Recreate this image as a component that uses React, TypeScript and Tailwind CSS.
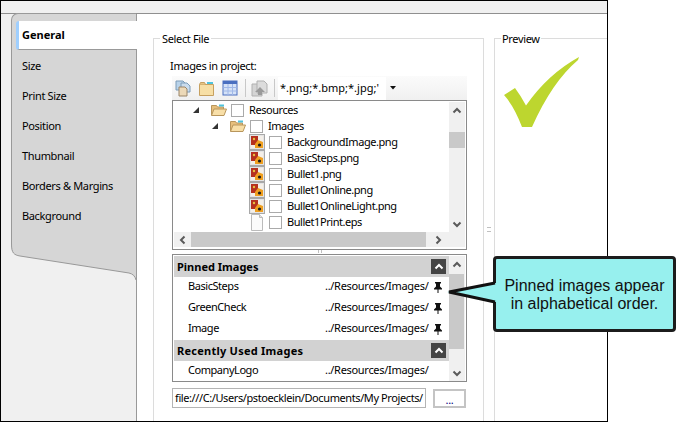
import React from "react";

const ui = { fontFamily: '"Noto Sans", sans-serif' };

function Chevron({ dir, color = "#5a5a5a" }: { dir: "up" | "down" | "left" | "right"; color?: string }) {
  const pts = {
    up: "1.5,6.5 5,3 8.5,6.5",
    down: "1.5,3.5 5,7 8.5,3.5",
    left: "6.5,1.5 3,5 6.5,8.5",
    right: "3.5,1.5 7,5 3.5,8.5",
  }[dir];
  return (
    <svg width="10" height="10" viewBox="0 0 10 10">
      <polyline points={pts} fill="none" stroke={color} strokeWidth="2" />
    </svg>
  );
}

function Check() {
  return <span className="block w-[13px] h-[13px] shrink-0 border border-[#aaaaaa] bg-white" />;
}

function Triangle() {
  return (
    <svg width="6" height="6" viewBox="0 0 6 6" className="shrink-0">
      <polygon points="6,0 6,6 0,6" fill="#333333" />
    </svg>
  );
}

function FolderOpen() {
  return (
    <svg width="16" height="16" viewBox="0 0 16 16" className="shrink-0">
      <path d="M0.5 3.500h5l1 1.500h6v8h-12z" fill="#e7bf7c" stroke="#b8965c" />
      <path d="M8 2.500h5v2H8z" fill="#4fc3dc" />
      <path d="M0.500 13.500l2.500-6.500h12.500l-2.500 6.500z" fill="#f8dfa8" stroke="#b8965c" />
    </svg>
  );
}

function ImageIcon() {
  return (
    <svg width="16" height="16" viewBox="0 0 16 16" className="shrink-0">
      <rect x="0.5" y="0.5" width="15" height="15" fill="#e4e4e4" stroke="#a8a8a8" />
      <rect x="2" y="2" width="12" height="12" fill="#f4efe8" />
      <rect x="2" y="2" width="7" height="9" fill="#b5301f" />
      <circle cx="5" cy="5" r="1.200" fill="#e8c040" />
      <path d="M6 10l3-4 5 2v6H6z" fill="#f0a020" />
      <circle cx="10.500" cy="11" r="1.600" fill="#1c1c1c" />
    </svg>
  );
}

function DocIcon() {
  return (
    <svg width="16" height="17" viewBox="0 0 16 17" className="shrink-0">
      <path d="M2.500 0.500h8l3 3v13h-11z" fill="#fbfbfb" stroke="#bbbbbb" />
      <path d="M10.500 0.500v3h3" fill="#e4e4e4" stroke="#bbbbbb" />
    </svg>
  );
}

function Pin() {
  return (
    <svg width="8" height="11" viewBox="0 0 8 11">
      <path d="M1 0h6v1.500H6V4.500L8 6.500V7.500H4.500V11H3.500V7.500H0V6.500L2 4.500V1.500H1z" fill="#111111" />
    </svg>
  );
}

function CollapseButton() {
  return (
    <span className="w-[15px] h-[15px] bg-[#444444] flex items-center justify-center">
      <Chevron dir="up" color="#ffffff" />
    </span>
  );
}

function TreeRow({ indent, icon, name }: { indent: string; icon: React.ReactNode; name: string }) {
  return (
    <div className={`h-[16px] flex items-center ${indent}`}>
      {icon}
      <span className="ml-[4px]"><Check /></span>
      <span className="ml-[5px] whitespace-nowrap tracking-[-0.45px]">{name}</span>
    </div>
  );
}

const files: [string, boolean][] = [
  ["BackgroundImage.png", true],
  ["BasicSteps.png", true],
  ["Bullet1.png", true],
  ["Bullet1Online.png", true],
  ["Bullet1OnlineLight.png", true],
  ["Bullet1Print.eps", false],
];

function PinnedRow({ name, path, pin }: { name: string; path: string; pin: boolean }) {
  return (
    <div className="h-[21px] flex items-center bg-white pl-[14px] tracking-[-0.45px]">
      <span className="w-[137px] shrink-0 pb-[3px]">{name}</span>
      <span className={`${pin ? "w-[104px]" : "w-[107px]"} shrink-0 overflow-hidden whitespace-nowrap pb-[3px] tracking-[-0.3px]`}>{path}</span>
      {pin && <span className="ml-[5px] flex"><Pin /></span>}
    </div>
  );
}

function PinnedHeader({ title, tracking }: { title: string; tracking: string }) {
  return (
    <div className={`h-[21px] flex items-center justify-between bg-[#d2d2d2] pl-[3px] pr-[3px] font-bold ${tracking}`}>
      <span>{title}</span>
      <CollapseButton />
    </div>
  );
}

const tabs = ["Size", "Print Size", "Position", "Thumbnail", "Borders & Margins", "Background"];

export default function App() {
  return (
    <div className="relative w-[685px] h-[422px] bg-white text-[11px] leading-[14px] tracking-[-0.35px] text-black overflow-hidden" style={ui}>
      <div className="w-[608px] h-[422px] border border-black flex flex-col">
        <div className="h-[13px] shrink-0 bg-[#f0f0f0] border-b border-[#8f8f8f]" />
        <div className="flex-1 flex min-h-0">
          {/* Sidebar */}
          <aside className="w-[136px] shrink-0 bg-[#f0f0f0] border-r border-[#999999] pl-[10px] flex flex-col">
            <div className="-mt-px h-[231px] bg-[#d6d6d6] border-l border-t border-[#999999] rounded-tl-[7px] pt-[7px] pl-[4px]">
              <div className="relative h-[29px] -mr-[1px] bg-white border-b border-[#999999] border-l-[3px] border-l-[#9fcfff] rounded-l-[3px] flex items-center pl-[3px] font-bold tracking-normal">
                General
              </div>
              <div className="flex flex-col pl-[6px] pt-[1px]">
                {tabs.map((t) => (
                  <div key={t} className="h-[30px] flex items-center whitespace-nowrap">{t}</div>
                ))}
              </div>
            </div>
            <svg width="125" height="37" viewBox="0 0 125 37" className="block shrink-0">
              <path d="M0 0C0 9 3 11 9 12L118 29C122 30 124 32 125 36V0z" fill="#d6d6d6" />
              <path d="M0.500 0C0.500 9 3 11 9 12L118 29C122 30 124 32 125 36" fill="none" stroke="#999999" />
            </svg>
          </aside>

          {/* Main */}
          <main className="flex-1 min-w-0 bg-white pl-[16px] pt-[24px] flex">
            <section className="relative w-[331px] shrink-0 border-l border-t border-r border-[#dcdcdc] pl-[18px] pt-[19px]">
              <span className="absolute -top-[7px] left-[6px] bg-white px-[2px]">Select File</span>
              <div className="-ml-[2px] h-[15px] flex items-center">Images in project:</div>
              {/* Toolbar */}
              <div className="mt-[3px] w-[295px] h-[24px] bg-gradient-to-b from-[#fbfbfb] to-[#f0f0f0] flex items-center pl-[3px]">
                <svg width="17" height="17" viewBox="0 0 17 17" className="shrink-0">
                  <path d="M1 1h7l2 2v7H1z" fill="#b9d3ea" stroke="#7d9cb8" />
                  <path d="M6 3h6l3 3v6H6z" fill="#c9dcee" stroke="#7d9cb8" />
                  <path d="M4 7h6l2 2v7H4z" fill="#ecd9b8" stroke="#9a8568" />
                </svg>
                <svg width="17" height="17" viewBox="0 0 17 17" className="ml-[6px] shrink-0">
                  <path d="M1.500 4.500h14v11h-14z" fill="#f7dfa6" stroke="#c6a060" />
                  <path d="M1.500 4.500l1-2h4l1 2" fill="#e7c585" stroke="#c6a060" />
                  <path d="M9 2h6v2H9z" fill="#4fc3dc" />
                </svg>
                <svg width="16" height="16" viewBox="0 0 16 16" className="ml-[7px] shrink-0">
                  <rect x="1" y="1" width="14" height="14" fill="#d5e2f7" stroke="#4a6fc0" />
                  <rect x="1" y="1" width="14" height="3" fill="#4a6fc0" />
                  <path d="M1.500 7.500h13M1.500 11h13M6 4v11M10.500 4v11" stroke="#a0b8e8" fill="none" />
                </svg>
                <span className="ml-[7px] w-px h-[18px] bg-[#c8c8c8]" />
                <svg width="17" height="17" viewBox="0 0 17 17" className="ml-[5px] shrink-0">
                  <path d="M1 4h8l2 2v10H1z" fill="#d4d4d4" stroke="#b0b0b0" />
                  <path d="M6 1h7l3 3v9H6z" fill="#dcdcdc" stroke="#b0b0b0" />
                  <path d="M4 12l5-5 5 5h-3v3H7v-3z" fill="#9a9a9a" />
                </svg>
                <span className="ml-[6px] w-px h-[18px] bg-[#c8c8c8]" />
                <div className="ml-[3px] w-[108px] h-[23px] bg-white flex items-center pl-[2px] overflow-hidden whitespace-nowrap tracking-[0px]">
                  *.png;*.bmp;*.jpg;'
                </div>
                <div className="ml-[1px] w-[12px] h-[23px] flex items-center justify-center">
                  <svg width="6" height="4" viewBox="0 0 6 4"><polygon points="0,0 6,0 3,3.500" fill="#111111" /></svg>
                </div>
              </div>
              {/* Tree */}
              <div className="w-[295px] h-[150px] border border-[#8a8a8a] p-[1px] flex flex-col">
                <div className="flex h-[130px]">
                  <div className="w-[275px] shrink-0 overflow-hidden">
                    <TreeRow indent="pl-[19px]" icon={<span className="flex items-center gap-[12px]"><Triangle /><FolderOpen /></span>} name="Resources" />
                    <TreeRow indent="pl-[38px]" icon={<span className="flex items-center gap-[12px]"><Triangle /><FolderOpen /></span>} name="Images" />
                    {files.map(([n, img]) => (
                      <TreeRow key={n} indent="pl-[75px]" icon={img ? <ImageIcon /> : <DocIcon />} name={n} />
                    ))}
                  </div>
                  <div className="w-[16px] shrink-0 bg-[#f0f0f0] flex flex-col items-center">
                    <div className="h-[17px] flex items-center"><Chevron dir="up" /></div>
                    <div className="mt-[13px] w-full h-[16px] bg-[#c9c9c9]" />
                    <div className="mt-auto h-[17px] flex items-center"><Chevron dir="down" /></div>
                  </div>
                </div>
                <div className="h-[15px] flex bg-[#f0f0f0] w-[291px] mb-[1px]">
                  <div className="w-[17px] flex items-center justify-center"><Chevron dir="left" /></div>
                  <div className="w-[235px] bg-[#c9c9c9]" />
                  <div className="w-[23px] flex items-center justify-center"><Chevron dir="right" /></div>
                </div>
              </div>
              {/* Splitter grip */}
              <div className="h-[4px] w-[295px] flex justify-center">
                <span className="w-[4px] h-[3px] border-x border-[#c0c0c0]" />
              </div>
              {/* Pinned */}
              <div className="w-[295px] h-[128px] border border-[#8a8a8a] pl-[1px] pt-[1px] flex">
                <div className="w-[275px] shrink-0 overflow-hidden">
                  <PinnedHeader title="Pinned Images" tracking="tracking-normal" />
                  <PinnedRow name="BasicSteps" path="../Resources/Images/" pin />
                  <PinnedRow name="GreenCheck" path="../Resources/Images/" pin />
                  <PinnedRow name="Image" path="../Resources/Images/" pin />
                  <PinnedHeader title="Recently Used Images" tracking="tracking-[0.25px]" />
                  <PinnedRow name="CompanyLogo" path="../Resources/Images/" pin={false} />
                </div>
                <div className="w-[16px] shrink-0 bg-[#f0f0f0] flex flex-col items-center">
                  <div className="h-[18px] flex items-center"><Chevron dir="up" /></div>
                  <div className="w-[15px] self-start h-[75px] bg-[#c9c9c9]" />
                  <div className="mt-auto h-[17px] flex items-center"><Chevron dir="down" /></div>
                </div>
              </div>
              {/* Path */}
              <div className="mt-[6px] w-[294px] flex justify-between">
                <div className="w-[254px] h-[20px] border border-[#b4b4b4] flex items-center pl-[2px] overflow-hidden whitespace-nowrap tracking-[-0.4px]">
                  file:///C:/Users/pstoecklein/Documents/My Projects/
                </div>
                <button className="w-[33px] h-[19px] mt-px border-2 border-[#c4c4c4] bg-white flex items-center justify-center pt-[2px] text-[#000080]">...</button>
              </div>
            </section>

            {/* Vertical splitter grip */}
            <div className="w-[10px] shrink-0 flex justify-center pt-[189px]">
              <span className="w-[4px] h-[5px] border-y border-[#c0c0c0]" />
            </div>

            <section className="relative flex-1 border-l border-t border-[#dcdcdc] pl-[9px] pt-[18px]">
              <span className="absolute -top-[7px] left-[6px] bg-white px-[1px]">Preview</span>
              <svg width="76" height="71" viewBox="504 57 76 71" className="block">
                <path d="M504 95L515 88Q521 96 526 105.500Q548 74 579 57L578 60Q552 82 532 127L522 127Q514 106 504 95Z" fill="#bdd62f" />
              </svg>
            </section>
          </main>
        </div>
      </div>

      {/* Callout */}
      <div className="absolute left-[493px] top-[256px] w-[183px] h-[76px] bg-[#97f0ee] border-[3px] border-[#1c1c1c] rounded-[4px] flex items-center justify-center pt-[2px] text-center text-[16px] leading-[18px] tracking-normal text-[#111111]" style={{ fontFamily: '"Liberation Sans", sans-serif' }}>
        <span>Pinned images appear<br />in alphabetical order.</span>
      </div>
      <svg width="56" height="30" viewBox="444 278 56 30" className="absolute left-[444px] top-[278px]">
        <polygon points="447,292 496,283 496,302" fill="#97f0ee" />
        <polyline points="495,283 449,292 495,302" fill="none" stroke="#111111" strokeWidth="3" />
      </svg>
    </div>
  );
}
